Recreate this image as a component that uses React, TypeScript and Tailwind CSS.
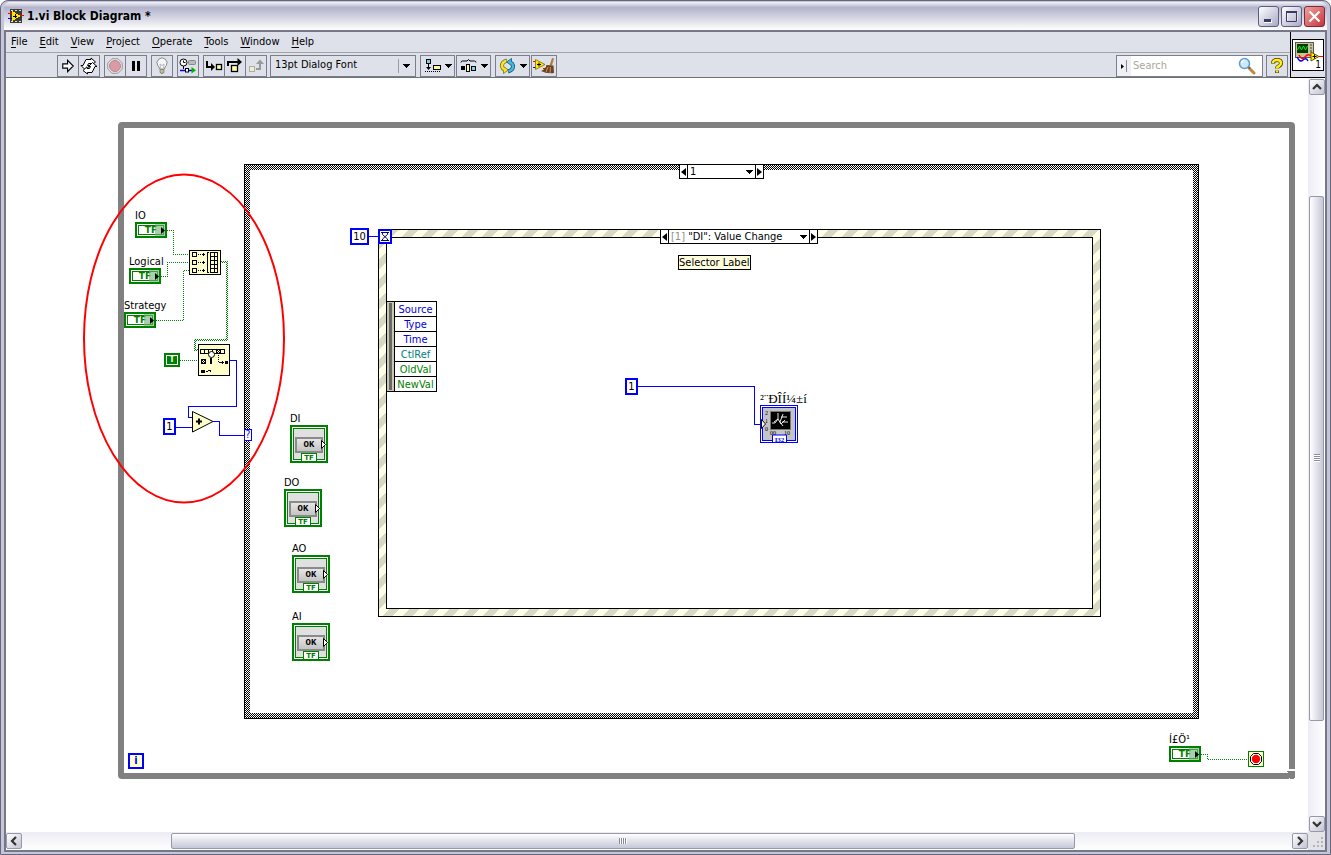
import type { ReactNode } from "react";

const MENU = ["File", "Edit", "View", "Project", "Operate", "Tools", "Window", "Help"];

const TERMINALS = [
  { label: "IO", pos: "left-[129px] top-[130px]" },
  { label: "Logical", pos: "left-[123px] top-[176px]" },
  { label: "Strategy", pos: "left-[118px] top-[220px]" },
  { label: "Í£Ö¹", pos: "left-[1163px] top-[654px]" },
];

const OK_BUTTONS = [
  { label: "DI", pos: "left-[284px] top-[333px]" },
  { label: "DO", pos: "left-[278px] top-[397px]" },
  { label: "AO", pos: "left-[286px] top-[463px]" },
  { label: "AI", pos: "left-[286px] top-[531px]" },
];

const EVENT_DATA = [
  { name: "Source", color: "text-[#0000d8]" },
  { name: "Type", color: "text-[#0000d8]" },
  { name: "Time", color: "text-[#0000d8]" },
  { name: "CtlRef", color: "text-[#008080]" },
  { name: "OldVal", color: "text-[#008000]" },
  { name: "NewVal", color: "text-[#008000]" },
];

/* ---------- Title bar ---------- */

const AppIcon = () => (
  <svg width="16" height="16" viewBox="0 0 16 16" shapeRendering="crispEdges">
    <rect x="2" y="1" width="12" height="14" fill="#3c3c34" />
    <path d="M3 2h2v1H3zM7 2h2v1H7zM11 2h2v1h-2zM3 13h2v1H3zM7 13h2v1H7zM11 13h2v1h-2z" fill="#e0e0d0" />
    <path d="M0 5.5h5" stroke="#f00" />
    <path d="M0 10.5h5" stroke="#00f" />
    <path d="M12 7.5h4" stroke="#f00" />
    <path d="M4 3l9 5-9 5z" fill="#ffe800" />
    <path d="M5 8h4M7 6v4" stroke="#000" />
  </svg>
);

const TitleBar = () => (
  <header className="flex h-7 shrink-0 items-center gap-[3px] rounded-t-md bg-linear-to-b from-[#f4f4fa] via-[#b3b4cb] via-20% to-white pl-1 pr-0.5">
    <AppIcon />
    <h1 className="flex-1 text-[12px] font-bold leading-4">1.vi Block Diagram *</h1>
    <div className="flex gap-0.5">
      <button aria-label="Minimize" className="flex h-[21px] w-[21px] items-center justify-center rounded-[3px] border border-[#5c5c80] bg-linear-to-br from-white to-[#a9a9c6]">
        <svg width="15" height="15" viewBox="0 0 15 15"><path d="M3 11h8v3H3z" fill="#fff" /><path d="M3 10h7v3H3z" fill="#3b3b60" /></svg>
      </button>
      <button aria-label="Maximize" className="flex h-[21px] w-[21px] items-center justify-center rounded-[3px] border border-[#5c5c80] bg-linear-to-br from-white to-[#a9a9c6]">
        <svg width="15" height="15" viewBox="0 0 15 15" fill="none"><path d="M3 3.5h10v9H3z" stroke="#fff" /><path d="M2.5 3.5h10v9h-10z" stroke="#3b3b60" /><path d="M2 3h11" stroke="#3b3b60" strokeWidth="2" /></svg>
      </button>
      <button aria-label="Close" className="flex h-[21px] w-[21px] items-center justify-center rounded-[3px] border border-[#7a2c38] bg-linear-to-br from-[#f0a0a0] to-[#c52f3d]">
        <svg width="15" height="15" viewBox="0 0 15 15"><path d="M2.5 2.5l10 10M12.5 2.5l-10 10" stroke="#fff" strokeWidth="2.2" /></svg>
      </button>
    </div>
  </header>
);

/* ---------- Toolbar ---------- */

const ToolButton = ({ label, wide, children }: { label: string; wide?: boolean; children: ReactNode }) => (
  <button
    aria-label={label}
    className={`-ml-px flex h-[22px] items-center justify-center border border-[#7b7f8c] bg-[#dfe1ea] ${wide ? "w-[35px] gap-1" : "w-[22px]"}`}
  >
    {children}
  </button>
);

const Group = ({ children }: { children: ReactNode }) => <div className="flex pl-px">{children}</div>;

const Caret = () => (
  <svg width="7" height="4" viewBox="0 0 7 4" shapeRendering="crispEdges" className="pointer-events-none shrink-0">
    <path d="M0 0h7v1H0zM1 1h5v1H1zM2 2h3v1H2zM3 3h1v1H3z" />
  </svg>
);

const Toolbar = () => (
  <div className="flex h-6 items-center gap-1 pl-[51px] pr-0.5 pt-0.5">
    <Group>
      <ToolButton label="Run">
        <svg width="14" height="14" viewBox="0 0 16 16"><path d="M2 5.500h5.500v-4l6.500 6.500-6.500 6.500v-4H2z" fill="#fff" stroke="#000" strokeWidth="1.300" /></svg>
      </ToolButton>
      <ToolButton label="Run Continuously">
        <svg width="18" height="18" viewBox="0 0 18 18" fill="#fff" stroke="#000" strokeWidth="1">
          <path d="M3 8.500L6 2.500h5V1l4.500 4L11 8.500V6.500H8.500l-1 2H10L5.500 13 1 8.500z" />
          <path d="M15 9.500l-3 6H7.500V17L3 13.500 7 9.800V11.500h2.500l1-2H8.500L12.500 5.500 17 9.500z" />
        </svg>
      </ToolButton>
    </Group>
    <Group>
      <ToolButton label="Abort Execution">
        <svg width="16" height="16" viewBox="0 0 16 16"><path d="M5 .7h6L15.300 5v6L11 15.300H5L.7 11V5z" fill="#e3e3e6" stroke="#9b9b9b" /><circle cx="8" cy="8" r="5.500" fill="#d99ba6" stroke="#b88" /></svg>
      </ToolButton>
      <ToolButton label="Pause">
        <svg width="12" height="12" viewBox="0 0 12 12" shapeRendering="crispEdges"><path d="M2 1h3v10H2zM7 1h3v10H7z" /></svg>
      </ToolButton>
    </Group>
    <Group>
      <ToolButton label="Highlight Execution">
        <svg width="16" height="18" viewBox="0 0 16 18">
          <path d="M5.500 12q0-2-1.800-3.500A5 5 0 1 1 12.300 8.500Q10.500 10 10.500 12z" fill="#f6f6f6" stroke="#8a8a8a" />
          <path d="M6.500 11L6 7l2 1.500L10 7l-.5 4" fill="none" stroke="#aaa" strokeWidth=".8" />
          <path d="M6 12.500h4v3H9v1H7v-1H6z" fill="#c5bf8e" stroke="#777" strokeWidth=".7" />
        </svg>
      </ToolButton>
    </Group>
    <Group>
      <ToolButton label="Retain Wire Values">
        <svg width="18" height="16" viewBox="0 0 18 16">
          <rect x="9.500" y="2.500" width="7" height="4" rx="1" fill="#bbb" stroke="#888" />
          <circle cx="4.500" cy="4.500" r="3.500" fill="#fff" stroke="#000" /><path d="M4.500 2.500v2H6.500M4.500 8v3" stroke="#000" fill="none" />
          <path d="M1 12.500h12" stroke="#00f" strokeWidth="1.400" /><rect x="6.500" y="10.500" width="3" height="3.500" fill="#fff" stroke="#000" />
          <path d="M12.500 9v6.500L17 12.300z" fill="#00b400" />
        </svg>
      </ToolButton>
    </Group>
    <Group>
      <ToolButton label="Step Into">
        <svg width="18" height="16" viewBox="0 0 18 16"><path d="M2 3v6h5" fill="none" stroke="#000" strokeWidth="2" /><path d="M6 5v8l4-4z" /><rect x="11.500" y="6.500" width="5" height="5" fill="#ffff9c" stroke="#000" strokeWidth="1.300" /></svg>
      </ToolButton>
      <ToolButton label="Step Over">
        <svg width="18" height="16" viewBox="0 0 18 16"><path d="M2 8V4h10" fill="none" stroke="#000" strokeWidth="2" /><path d="M11.500 0v8L16 4z" /><rect x="5.500" y="7.500" width="6" height="6" fill="#ffff9c" stroke="#000" strokeWidth="1.300" /></svg>
      </ToolButton>
      <ToolButton label="Step Out">
        <svg width="18" height="16" viewBox="0 0 18 16"><rect x="2.500" y="8.500" width="5" height="5" fill="#efefc8" stroke="#aaa" /><path d="M9 11h4V5" fill="none" stroke="#999" strokeWidth="2" /><path d="M9 6h8l-4-4.500z" fill="#999" /></svg>
      </ToolButton>
    </Group>
    <div className="relative -ml-px h-[22px] w-[146px]">
      <select aria-label="Text Settings" className="h-full w-full appearance-none border border-[#7b7f8c] bg-[#dfe1ea] pb-px pl-1 text-[11px]">
        <option>13pt Dialog Font</option>
      </select>
      <span className="pointer-events-none absolute inset-y-1 right-[6px] flex items-center border-l border-[#9a9ca6] pl-1">
        <Caret />
      </span>
    </div>
    <div className="flex gap-px">
      <Group>
        <ToolButton label="Align Objects" wide>
          <svg width="17" height="16" viewBox="0 0 17 16"><rect x="2.500" y="1.500" width="4" height="4" fill="#6cd9ea" stroke="#000" /><path d="M4.500 6v4" stroke="#000" /><path d="M2 9h5l-2.500 3z" /><rect x="9.500" y="7.500" width="7" height="4" fill="#ffff9c" stroke="#000" /><path d="M1 13.500h15" stroke="#000" strokeDasharray="1 1" /></svg>
          <Caret />
        </ToolButton>
      </Group>
      <Group>
        <ToolButton label="Distribute Objects" wide>
          <svg width="17" height="16" viewBox="0 0 17 16"><path d="M1 4.500q0-1.500 1.500-1.500H7l1.500-1.500L10 3h4.500q1.500 0 1.500 1.500" fill="none" stroke="#000" /><path d="M1 8h4v4H1z" /><rect x="6.500" y="6.500" width="3" height="7" fill="#ffff9c" stroke="#000" /><rect x="11.500" y="8.500" width="4" height="4" fill="#6cd9ea" stroke="#000" /></svg>
          <Caret />
        </ToolButton>
      </Group>
    </div>
    <div className="flex gap-px">
      <Group>
        <ToolButton label="Reorder" wide>
          <svg width="17" height="16" viewBox="0 0 17 16" fill="none">
            <path d="M8 2.500Q2.500 4 3 8.500q.5 2 2.500 3" stroke="#7c7010" strokeWidth="4" />
            <path d="M4.500 15.500V8.500L9.500 12z" fill="#f6e42c" stroke="#7c7010" strokeWidth=".8" />
            <path d="M7.500 2.700Q2.700 4 3 8.500q.5 2 2.500 3" stroke="#f6e42c" strokeWidth="2.500" />
            <path d="M9 13.500q5.500-1.500 5-6-.5-2-2.500-3" stroke="#0d5a7c" strokeWidth="4" />
            <path d="M12.500 .5v7L7.500 4z" fill="#46b9dc" stroke="#0d5a7c" strokeWidth=".8" />
            <path d="M9.500 13.300q5-1.300 4.500-5.800-.5-2-2.500-3" stroke="#46b9dc" strokeWidth="2.500" />
          </svg>
          <Caret />
        </ToolButton>
      </Group>
      <button aria-label="Clean Up Diagram" className="flex h-[22px] w-[26px] items-center justify-center border border-[#7b7f8c]">
        <svg width="22" height="16" viewBox="0 0 22 16">
          <path d="M0 3.500h4" stroke="#f00" /><path d="M10 10.500h4" stroke="#f00" /><path d="M0 9.500h4" stroke="#00f" />
          <path d="M2.500 1.500l9.500 5-9.500 5z" fill="#ffe900" stroke="#7c6c00" strokeWidth=".8" /><path d="M4 6.500h4M6 4.500v4" stroke="#000" />
          <path d="M19 0l2 .5-2 7h-2.500z" fill="#b07c44" />
          <path d="M13.500 7l7 .5.500 7.500q-7 1-13-2 4.500-1.500 5.500-6z" fill="#6e4220" /><path d="M15 9l-2 5M17.500 9l-.5 6" stroke="#c99a58" />
        </svg>
      </button>
    </div>

    <div className="ml-auto flex items-center gap-[3px]">
      <label className="flex h-[22px] w-[147px] items-center border border-[#7b7f8c] bg-white">
        <span className="flex h-full w-[14px] items-center justify-between bg-[#eef0f5] pl-1">
          <svg width="3" height="5" viewBox="0 0 3 5"><path d="M0 0l3 2.500L0 5z" /></svg>
          <span className="mr-1 h-3 w-px bg-[#8a8a8a]" />
        </span>
        <input aria-label="Search" placeholder="Search" className="w-0 flex-1 bg-transparent pl-0.5 text-[11px] outline-none placeholder:text-[#a9a797]" />
        <svg width="18" height="18" viewBox="0 0 18 18" className="mr-[6px]">
          <path d="M11 11l5 5" stroke="#c8843c" strokeWidth="3" strokeLinecap="round" />
          <path d="M10 9.500l2 2" stroke="#666" strokeWidth="2" />
          <circle cx="6.500" cy="6.500" r="5" fill="#cdeafc" stroke="#5d9bd0" strokeWidth="1.500" />
          <path d="M3.500 6q.5-2.500 3-2.800" stroke="#fff" strokeWidth="1.500" fill="none" />
        </svg>
      </label>
      <button aria-label="Context Help" className="flex h-[22px] w-[22px] items-center justify-center border border-[#7b7f8c]">
        <svg width="14" height="16" viewBox="0 0 14 16" fill="none">
          <path d="M3 5.500Q3 2 7 2t4 3q0 2-2 3t-2 2.500M7 12.500v2.500" stroke="#403c00" strokeWidth="4" />
          <path d="M3 5Q3 2 7 2t4 3q0 2-2 3t-2 2.500M7 12.500v2" stroke="#ffee10" strokeWidth="2.600" />
        </svg>
      </button>
    </div>
  </div>
);

const ViIcon = () => (
  <div className="flex w-[35px] shrink-0 items-center justify-center border-b border-l border-black">
    <div className="relative h-8 w-8 border border-black bg-white">
      <svg width="30" height="30" viewBox="0 0 30 30">
        <rect x="2.500" y="2.500" width="18" height="15" fill="#c8c39a" stroke="#555" />
        <rect x="4" y="4" width="11" height="9" fill="#003c00" />
        <path d="M4.500 10l2-4 2 4 2-4 2 4 2-4" stroke="#20e820" fill="none" />
        <path d="M17 5h2M17 8h2M17 11h2" stroke="#444" />
        <path d="M4 17q3 6 6 3t5 1" stroke="#00f" fill="none" strokeWidth="1.500" /><path d="M6 15q3 6 6 2t6-1" stroke="#f00" fill="none" strokeWidth="1.500" />
        <path d="M18 12l8 4.500-8 4.500z" fill="#ffee00" stroke="#665c00" /><path d="M19.500 16.500h4M21.500 14.500v4" stroke="#000" /><path d="M26 16.500h4" stroke="#f00" />
      </svg>
      <span className="absolute bottom-0 right-0.5 text-[10px] leading-[10px]">1</span>
    </div>
  </div>
);

/* ---------- Diagram nodes ---------- */

const NodeLabel = ({ children }: { children: ReactNode }) => <div className="h-[14px] whitespace-nowrap leading-4">{children}</div>;

const BoolTerminal = () => (
  <div className="relative flex h-4 w-8 items-center justify-center border-2 border-[#008000] bg-white p-px">
    <div className="h-full w-full border border-[#008000] text-center font-['DejaVu_Sans',sans-serif] text-[9px] font-bold leading-[9px] text-[#008000]">TF</div>
    <div className="absolute inset-y-0 right-0 flex w-2.5 items-center justify-end bg-[#70b070]/60">
      <svg width="4" height="7" viewBox="0 0 4 7"><path d="M0 0l4 3.500L0 7z" /></svg>
    </div>
  </div>
);

const OkTerminal = () => (
  <div className="relative h-[38px] w-[38px] border-2 border-[#008000] bg-white p-px">
    <div className="flex h-full flex-col items-center justify-between border border-[#008000] bg-[#e0e0e0] pt-2">
      <button className="h-4 w-7 border-2 border-[#8a8a8a] bg-linear-to-b from-[#e6e6e6] to-[#c4c4c4] font-['Liberation_Mono',monospace] text-[9px] font-bold leading-3">OK</button>
    </div>
    <div className="absolute bottom-0 left-[9px] h-2 w-4 border border-b-0 border-[#008000] bg-white text-center font-['DejaVu_Sans',sans-serif] text-[7px] font-bold leading-[8px] text-[#008000]">TF</div>
    <svg width="5" height="9" viewBox="0 0 5 9" className="absolute right-0 top-[13px]"><path d="M.5 .5l4 4-4 4z" fill="#fff" stroke="#000" /></svg>
  </div>
);

const Constant = ({ value, className }: { value: string; className: string }) => (
  <div className={`absolute flex h-[17px] justify-center border-2 border-[#0000ff] bg-white leading-[14px] ${className}`}>{value}</div>
);

const Selector = ({ name, className, children }: { name: string; className: string; children: ReactNode }) => (
  <div className={`absolute flex h-[15px] items-stretch border border-black bg-white ${className}`}>
    <button aria-label={`Previous ${name}`} className="flex w-2 items-center justify-center border-r border-black">
      <svg width="5" height="8" viewBox="0 0 5 8"><path d="M5 0v8L0 4z" /></svg>
    </button>
    <button className="flex flex-1 items-center justify-between px-0.5 leading-[14px]">
      <span>{children}</span>
      <Caret />
    </button>
    <button aria-label={`Next ${name}`} className="flex w-2 items-center justify-center border-l border-black">
      <svg width="5" height="8" viewBox="0 0 5 8"><path d="M0 0v8l5-4z" /></svg>
    </button>
  </div>
);

const Structures = () => (
  <>
    {/* While loop */}
    <div className="absolute left-[112px] top-[44px] h-[657px] w-[1177px] rounded-[4px] border-[6px] border-[#808080]" />
    <svg width="8" height="10" viewBox="0 0 8 10" className="absolute left-[1281px] top-[691px]" shapeRendering="crispEdges">
      <path d="M0 0h8v10H0z" fill="#fff" />
      <path d="M0 2h8v7H7v1H3V9L0 10V4h1V3H0z" fill="#808080" />
    </svg>

    {/* Case structure */}
    <div className="absolute left-[238px] top-[86px] h-[555px] w-[955px] border border-black bg-[repeating-conic-gradient(#000_0_25%,#fff_0_50%)] bg-size-[2px_2px] p-[5px]">
      <div className="h-full bg-white" />
    </div>
    <Selector name="case" className="left-[673px] top-[86px] w-[85px]">1</Selector>

    {/* Event structure */}
    <div className="absolute left-[372px] top-[151px] h-[388px] w-[723px] border border-black bg-[linear-gradient(135deg,#ffffe6_25%,#d8d8c4_25%_50%,#ffffe6_50%_75%,#d8d8c4_75%)] bg-size-[20px_20px] p-[7px]">
      <div className="h-full border border-black bg-white" />
    </div>
    <Selector name="event" className="left-[654px] top-[151px] w-[158px]">
      <span className="text-[#909090]">[1]</span> "DI": Value Change
    </Selector>
    <div className="absolute left-[672px] top-[177px] border border-black bg-[#ffffe0] leading-[13px]">Selector Label</div>

    {/* Event data node */}
    <div className="absolute left-[380px] top-[223px] flex w-[51px] border border-black">
      <div className="w-[7px] bg-[#c8c8b4] px-0.5 py-px"><div className="h-full bg-[#6a6a62]" /></div>
      <ul className="flex-1 divide-y divide-black border-l border-black bg-white text-center leading-4">
        {EVENT_DATA.map((row) => (
          <li key={row.name} className={`h-[15px] last:h-[14px] ${row.color}`}>{row.name}</li>
        ))}
      </ul>
    </div>
  </>
);

const Wires = () => (
  <svg width="1302" height="754" viewBox="0 0 1302 754" fill="none" className="pointer-events-none absolute left-0 top-0">
    <defs>
      <pattern id="bool" width="2" height="2" patternUnits="userSpaceOnUse">
        <path d="M0 0h1v1H0zM1 1h1v1H1z" fill="#008000" shapeRendering="crispEdges" />
      </pattern>
    </defs>

    <g stroke="#008000" strokeDasharray="1 1" shapeRendering="crispEdges">
      <path d="M161 152.500H167.500V176.500H183" />
      <path d="M155 198.500H161.500V184.500H183" />
      <path d="M150 242.500H177.500V192.500H183" />
      <path d="M174 282.500H192" />
      <path d="M1195 676.500H1201.500V681.500H1242" />
    </g>
    <path d="M215 184H221V262H189V272H192" stroke="url(#bool)" strokeWidth="2" />
    <g stroke="#0000ff" shapeRendering="crispEdges">
      <path d="M224 282.500H230.500V328.500H182.500V339.500H186" />
      <path d="M170 349.500H186" />
      <path d="M207 343.500H213.500V357.500H238" />
      <path d="M363 158.500H372" />
      <path d="M632 308.500H748.500V346.500H754" />
    </g>

    {/* Build array */}
    <g transform="translate(183 172)" shapeRendering="crispEdges" stroke="#000">
      <rect x=".5" y=".5" width="31" height="24" fill="#ffffcc" />
      <path d="M3.500 2.500h4v4h-4zM3.500 10.500h4v4h-4zM3.500 18.500h4v4h-4z" />
      <path d="M9 4.500h4M9 12.500h4M9 20.500h4" strokeDasharray="1 1" />
      <path d="M13 4.500h3M14.500 3v3M13 12.500h3M14.500 11v3M13 20.500h3M14.500 19v3" />
      <path d="M19.500 2.500h-1v20h1" />
      <path d="M21.500 2.500h7v20h-7zM25.500 2.500v20M21.500 6.500h7M21.500 10.500h7M21.500 14.500h7M21.500 18.500h7" />
    </g>

    {/* Search 1D array */}
    <g transform="translate(192 266)" shapeRendering="crispEdges" stroke="#000">
      <rect x=".5" y=".5" width="31" height="31" fill="#ffffcc" />
      <path d="M2.500 5.500h24v4h-24zM6.500 5.500v4M10.500 5.500v4M14.500 5.500v4M18.500 5.500v4M22.500 5.500v4" />
      <path d="M18.500 5.500l4 4M22.500 5.500l-4 4" />
      <circle cx="13.500" cy="10.500" r="3" fill="#fff" shapeRendering="auto" />
      <path d="M12.500 14v6" strokeWidth="2" />
      <path d="M3.500 15.500h4v4h-4zM3.500 15.500l4 4M7.500 15.500l-4 4" />
      <path d="M20.500 11v7.500H22" strokeDasharray="1 1" />
      <path d="M22 18.500h4M24.500 17v3" />
      <path d="M27 17h3v3h-3zM3 26h4v3H3z" fill="#000" stroke="none" />
      <path d="M8 27.500h2M12 25.500v2M10 26.500h3" />
    </g>

    {/* Add */}
    <path d="M186.500 333.500V354L207 343.500z" fill="#ffffcc" stroke="#000" />
    <path d="M190 343.500h6M193 340.500v6" stroke="#000" strokeWidth="2" />

    <ellipse cx="178" cy="260.500" rx="100" ry="164" stroke="#ff0000" strokeWidth="2" />
  </svg>
);

const ChartTerminal = () => (
  <svg width="38" height="38" viewBox="0 0 38 38">
    <rect x=".5" y=".5" width="37" height="37" fill="#fff" stroke="#0000ff" />
    <rect x="2.500" y="2.500" width="33" height="33" fill="#c4c4c4" stroke="#0000ff" />
    <rect x="10.500" y="6.500" width="20" height="18" fill="#000" stroke="#777" />
    <path d="M12 18h3l3-4 3 5 4-4M18 8v6l-4 3M23 9l-3 8 3 4M21 12h6M22 17h6" fill="none" stroke="#fff" strokeWidth=".9" />
    <g fontSize="6" fill="#000">
      <text x="5" y="10">2</text>
      <text x="5" y="18">1</text>
      <text x="5" y="26">0</text>
      <text x="10" y="30">00</text>
      <text x="24" y="30">10</text>
    </g>
    <path d="M12.500 37v-7h14v7" fill="#fff" stroke="#0000ff" />
    <text x="19.500" y="37" fontSize="7" fontWeight="bold" textAnchor="middle" fill="#0000ff">I32</text>
    <path d="M1.500 14.500l4 4.500-4 4.500z" fill="#fff" stroke="#000" />
  </svg>
);

const Canvas = () => (
  <main className="relative min-w-0 flex-1 overflow-hidden bg-white">
    <Structures />

    {TERMINALS.map((t) => (
      <div key={t.label} className={`absolute w-8 ${t.pos}`}>
        <NodeLabel>{t.label}</NodeLabel>
        <BoolTerminal />
      </div>
    ))}
    {OK_BUTTONS.map((b) => (
      <div key={b.label} className={`absolute ${b.pos}`}>
        <NodeLabel>{b.label}</NodeLabel>
        <OkTerminal />
      </div>
    ))}

    <div className="absolute left-[754px] top-[313px] font-['Liberation_Serif',serif] text-[13px]">
      <NodeLabel>²¨ÐÎÍ¼±í</NodeLabel>
      <ChartTerminal />
    </div>

    <div className="absolute left-[158px] top-[275px] h-[14px] w-4 border-2 border-[#008000] bg-white p-px">
      <div className="h-full bg-[#008000] text-center text-[8px] font-bold leading-[8px] text-white">T</div>
    </div>
    <Constant value="1" className="left-[157px] top-[340px] w-[13px]" />
    <Constant value="10" className="left-[344px] top-[150px] w-[19px]" />
    <Constant value="1" className="left-[619px] top-[300px] w-[13px]" />
    <div className="absolute left-[238px] top-[351px] h-3 w-2 border border-[#0000ff] bg-white text-center text-[10px] leading-[10px] text-[#0000ff]">?</div>

    <svg width="14" height="15" viewBox="0 0 14 15" className="absolute left-[372px] top-[151px]">
      <rect x="1" y="1" width="12" height="13" fill="#ffffcc" stroke="#0000ff" strokeWidth="2" />
      <path d="M3 3.500h8M3 11.500h8M4.500 4v1.500L9.500 10v1.500M9.500 4v1.500L4.500 10v1.500" stroke="#0000a0" fill="none" />
    </svg>

    <div className="absolute left-[122px] top-[675px] h-4 w-4 border-2 border-[#0000ff] bg-[#ffffcc] text-center text-[11px] font-bold leading-3 text-[#0000ff]">i</div>
    <svg width="16" height="16" viewBox="0 0 16 16" className="absolute left-[1242px] top-[673px]">
      <rect x=".5" y=".5" width="15" height="15" fill="#ffffcc" stroke="#008000" />
      <path d="M5.500 2.500h5l3 3v5l-3 3h-5l-3-3v-5z" fill="#fff" stroke="#000" />
      <circle cx="8" cy="8" r="4.200" fill="#f00" />
    </svg>

    <Wires />
  </main>
);

/* ---------- Scroll bars ---------- */

const ScrollButton = ({ label, d }: { label: string; d: string }) => (
  <button aria-label={label} className="flex h-4 w-4 shrink-0 items-center justify-center rounded-[2px] border border-[#9798a8] bg-linear-to-br from-white to-[#c3c4d4]">
    <svg width="10" height="10" viewBox="0 0 10 10" fill="none"><path d={d} stroke="#333" strokeWidth="2.200" /></svg>
  </button>
);

const VerticalBar = () => (
  <div className="flex w-[17px] shrink-0 flex-col items-center bg-linear-to-r from-[#ececf4] to-white pt-px">
    <ScrollButton label="Scroll up" d="M1 7l4-4 4 4" />
    <div className="flex-[101]" />
    <div className="flex w-[15px] flex-[526] items-center justify-center rounded-[2px] border border-[#9798a8] bg-linear-to-r from-white to-[#c6c8d8]">
      <div className="h-2 w-1.5 bg-[repeating-linear-gradient(#8a8ba0_0_1px,#fff_1px_2px)]" />
    </div>
    <div className="flex-[95]" />
    <ScrollButton label="Scroll down" d="M1 3l4 4 4-4" />
  </div>
);

const HorizontalBar = () => (
  <div className="flex h-[18px] shrink-0 bg-[#e4e4e8]">
    <div className="flex flex-1 items-center bg-linear-to-b from-[#ececf4] to-white">
      <ScrollButton label="Scroll left" d="M7 1L3 5l4 4" />
      <div className="flex-[149]" />
      <div className="flex h-4 flex-[904] items-center justify-center rounded-[2px] border border-[#9798a8] bg-linear-to-b from-white to-[#c6c8d8]">
        <div className="h-1.5 w-2 bg-[repeating-linear-gradient(90deg,#8a8ba0_0_1px,#fff_1px_2px)]" />
      </div>
      <div className="flex-[217]" />
      <ScrollButton label="Scroll right" d="M3 1l4 4-4 4" />
    </div>
    <svg width="17" height="18" viewBox="0 0 17 18" fill="#b4b4b0">
      <path d="M13 5h2v2h-2zM9 9h2v2H9zM13 9h2v2h-2zM5 13h2v2H5zM9 13h2v2H9zM13 13h2v2h-2z" />
    </svg>
  </div>
);

export default function App() {
  return (
    <div className="flex h-screen flex-col overflow-hidden rounded-t-lg border border-[#66667f] bg-[#c5c6d8] px-[3px] pb-0.5 pt-px font-['DejaVu_Sans_Condensed','DejaVu_Sans',sans-serif] text-[11px] text-black">
      <TitleBar />
      <div className="flex min-h-0 flex-1 flex-col border-2 border-[#76778a] bg-[#dfe1ea]">
        <div className="flex shrink-0">
          <div className="flex min-w-0 flex-1 flex-col border-b border-[#6f7078]">
            <nav className="flex h-[21px] items-center gap-3 border-b border-[#a3a4a8] pl-[5px]">
              {MENU.map((item) => (
                <a key={item} href="#">
                  <span className="underline underline-offset-2">{item[0]}</span>
                  {item.slice(1)}
                </a>
              ))}
            </nav>
            <Toolbar />
          </div>
          <ViIcon />
        </div>
        <div className="flex min-h-0 flex-1">
          <Canvas />
          <VerticalBar />
        </div>
        <HorizontalBar />
      </div>
    </div>
  );
}
